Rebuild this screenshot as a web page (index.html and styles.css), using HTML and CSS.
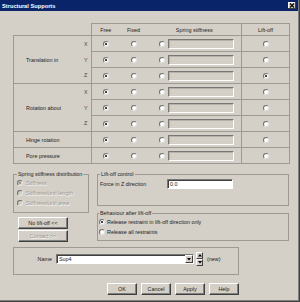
FILE: index.html
```html
<!DOCTYPE html>
<html>
<head>
<meta charset="utf-8">
<link rel="stylesheet" href="styles.css">
</head>
<body>
<div class="window">
  <div class="titlebar">
    <span class="title">Structural Supports</span>
    <span class="close"><svg width="6" height="5" viewBox="0 0 6 5"><path d="M1 0.5 L5 4.5 M5 0.5 L1 4.5" stroke="#000" stroke-width="1.1"/></svg></span>
  </div>
  <div class="content">
    <table class="grid">
      <colgroup><col class="c-lbl"><col class="c-xyz"><col class="c-free"><col class="c-fixed"><col class="c-spring"><col class="c-lift"></colgroup>
      <thead>
        <tr class="hdr"><th colspan="2" class="blank"></th><th class="free">Free</th><th>Fixed</th><th>Spring stiffness</th><th class="lift">Lift-off</th></tr>
      </thead>
      <tbody>
        <tr class="first"><td rowspan="3" class="lbl">Translation in</td><td class="xyz">X</td><td class="free"><span class="radio on"></span></td><td class="fixed"><span class="radio"></span></td><td class="spring"><div class="sp"><span class="radio"></span><span class="field"></span></div></td><td class="lift"><span class="radio"></span></td></tr>
        <tr><td class="xyz">Y</td><td class="free"><span class="radio on"></span></td><td class="fixed"><span class="radio"></span></td><td class="spring"><div class="sp"><span class="radio"></span><span class="field"></span></div></td><td class="lift"><span class="radio"></span></td></tr>
        <tr><td class="xyz">Z</td><td class="free"><span class="radio on"></span></td><td class="fixed"><span class="radio"></span></td><td class="spring"><div class="sp"><span class="radio"></span><span class="field"></span></div></td><td class="lift"><span class="radio on"></span></td></tr>
        <tr class="first"><td rowspan="3" class="lbl">Rotation about</td><td class="xyz">X</td><td class="free"><span class="radio on"></span></td><td class="fixed"><span class="radio"></span></td><td class="spring"><div class="sp"><span class="radio"></span><span class="field"></span></div></td><td class="lift"><span class="radio"></span></td></tr>
        <tr><td class="xyz">Y</td><td class="free"><span class="radio on"></span></td><td class="fixed"><span class="radio"></span></td><td class="spring"><div class="sp"><span class="radio"></span><span class="field"></span></div></td><td class="lift"><span class="radio"></span></td></tr>
        <tr><td class="xyz">Z</td><td class="free"><span class="radio on"></span></td><td class="fixed"><span class="radio"></span></td><td class="spring"><div class="sp"><span class="radio"></span><span class="field"></span></div></td><td class="lift"><span class="radio"></span></td></tr>
        <tr class="first"><td colspan="2" class="lbl">Hinge rotation</td><td class="free"><span class="radio on"></span></td><td class="fixed"><span class="radio"></span></td><td class="spring"><div class="sp"><span class="radio"></span><span class="field"></span></div></td><td class="lift"><span class="radio"></span></td></tr>
        <tr class="first last"><td colspan="2" class="lbl">Pore pressure</td><td class="free"><span class="radio on"></span></td><td class="fixed"><span class="radio"></span></td><td class="spring"><div class="sp"><span class="radio"></span><span class="field"></span></div></td><td class="lift"><span class="radio"></span></td></tr>
      </tbody>
    </table>

    <div class="lower">
      <div class="lcol">
        <fieldset class="grp dist">
          <legend>Spring stiffness distribution</legend>
          <div class="opt dis"><span class="radio on dis"></span><span>Stiffness</span></div>
          <div class="opt dis"><span class="radio dis"></span><span>Stiffness/unit length</span></div>
          <div class="opt dis"><span class="radio dis"></span><span>Stiffness/unit area</span></div>
        </fieldset>
        <button class="btn side">No lift-off &lt;&lt;</button>
        <button class="btn side contact" disabled>Contact &gt;&gt;</button>
      </div>
      <div class="rcol">
        <fieldset class="grp liftctl">
          <legend>Lift-off control</legend>
          <div class="frow"><span class="flabel">Force in Z direction</span><span class="input">0.0</span></div>
        </fieldset>
        <fieldset class="grp behav">
          <legend>Behaviour after lift-off</legend>
          <div class="opt"><span class="radio on"></span><span>Release restraint in lift-off direction only</span></div>
          <div class="opt"><span class="radio"></span><span>Release all restraints</span></div>
        </fieldset>
      </div>
    </div>

    <fieldset class="grp namebox">
      <div class="nrow">
        <span class="nlabel">Name</span>
        <span class="combo"><span class="ctext">Sup4</span><span class="ddbtn"><svg width="4" height="3" viewBox="0 0 4 3"><path d="M0 0 H4 L2 2.5 Z" fill="#000"/></svg></span></span>
        <span class="spin"><span class="sbtn"><svg width="4" height="3" viewBox="0 0 4 3"><path d="M0 2.5 H4 L2 0 Z" fill="#000"/></svg></span><span class="sbtn"><svg width="4" height="3" viewBox="0 0 4 3"><path d="M0 0 H4 L2 2.5 Z" fill="#000"/></svg></span></span>
        <span class="newtxt">(new)</span>
      </div>
    </fieldset>

    <div class="buttons">
      <button class="btn act">OK</button>
      <button class="btn act">Cancel</button>
      <button class="btn act">Apply</button>
      <button class="btn act">Help</button>
    </div>
  </div>
</div>
</body>
</html>
```

FILE: styles.css
```css
body {
  margin: 0;
  font-family: "Liberation Sans", Arial, sans-serif;
  font-size: 5.4px;
  color: #1c1c1c;
  background: #d4d0c8;
}

.window {
  width: 300px;
  height: 302px;
  box-sizing: border-box;
  background: #d4d0c8;
  box-shadow: inset -1px -1px 0 #404040, inset -2px -2px 0 #808080;
  display: flex;
  flex-direction: column;
}

.titlebar {
  width: 298px;
  height: 11px;
  box-sizing: border-box;
  background: #0a246a;
  display: flex;
  align-items: center;
  justify-content: space-between;
  padding: 0 2px 0 2px;
}

.title {
  color: #fff;
  font-weight: bold;
  font-size: 5.7px;
}

.close {
  width: 8px;
  height: 7px;
  background: #d4d0c8;
  box-shadow: inset -1px -1px 0 #404040, inset 1px 1px 0 #fff;
  display: flex;
  align-items: center;
  justify-content: center;
}

.content {
  padding: 12px 0 0 13px;
}

/* table */
.grid {
  border-collapse: collapse;
  table-layout: fixed;
  width: 277px;
}
.c-lbl { width: 67px; }
.c-xyz { width: 11px; }
.c-free { width: 28px; }
.c-fixed { width: 28px; }
.c-spring { width: 94px; }
.c-lift { width: 48px; }

.grid th, .grid td {
  padding: 0;
  vertical-align: middle;
  text-align: center;
}
.grid th {
  font-weight: normal;
  border-top: 1px solid #9d9a93;
  border-bottom: 1px solid #9d9a93;
}
.grid th.blank {
  border: none;
}
.hdr { height: 12px; }
.grid tbody tr { height: 16px; }

.grid td.free,
.grid td.fixed,
.grid td.spring,
.grid td.lift {
  border-top: 1px solid #9d9a93;
}
.grid .free { border-left: 1px solid #9d9a93; }
.grid .lift { border-left: 1px solid #9d9a93; border-right: 1px solid #9d9a93; }
.grid tr.first td { border-top: 1px solid #9d9a93; }
.grid tr.last td { border-bottom: 1px solid #9d9a93; }
.grid td.lbl {
  border-left: 1px solid #9d9a93;
  border-bottom: 1px solid #9d9a93;
  text-align: left;
  padding-left: 12px;
}
.grid td.xyz {
  text-align: center;
  color: #444;
}

.sp {
  display: flex;
  align-items: center;
  gap: 3px;
  padding-left: 11px;
}

.radio {
  display: inline-flex;
  align-items: center;
  justify-content: center;
  width: 6px;
  height: 6px;
  box-sizing: border-box;
  border-radius: 50%;
  background: #fff;
  border: 1px solid;
  border-color: #6e6e6e #e4e4e4 #e4e4e4 #6e6e6e;
  vertical-align: middle;
  flex: none;
}
.radio.on::after {
  content: "";
  width: 2px;
  height: 2px;
  border-radius: 50%;
  background: #000;
}
.radio.dis { background: #d4d0c8; }
.radio.dis.on::after { background: #8a8780; }

.field {
  display: inline-block;
  width: 66px;
  height: 10px;
  box-sizing: border-box;
  border: 1px solid;
  border-color: #7a7872 #fff #fff #7a7872;
  box-shadow: inset 1px 1px 0 #b5b2ab;
  background: #d4d0c8;
}

/* lower */
.lower {
  display: flex;
  gap: 8px;
  margin-top: 7px;
}
.lcol {
  width: 76px;
  display: flex;
  flex-direction: column;
}
.rcol {
  width: 192px;
  display: flex;
  flex-direction: column;
}

.grp {
  margin: 0;
  border: 1px solid #9d9a93;
  padding: 0 3px;
  min-width: 0;
  box-sizing: border-box;
}
.grp legend {
  padding: 0 1px;
  line-height: 7px;
  font-size: 5.4px;
}

.dist {
  width: 76px;
  padding-bottom: 4px;
}

.opt {
  display: flex;
  align-items: center;
  gap: 3px;
  height: 10px;
  white-space: nowrap;
}
.opt.dis span:last-child {
  color: #98958e;
  text-shadow: 0.6px 0.6px 0 #fff;
}

.btn {
  font-family: "Liberation Sans", Arial, sans-serif;
  font-size: 5.4px;
  color: #1c1c1c;
  background: #d4d0c8;
  border: 1px solid;
  border-color: #fff #404040 #404040 #fff;
  box-shadow: inset -1px -1px 0 #808080;
  padding: 0;
  height: 12px;
  box-sizing: border-box;
}
.btn.side {
  width: 50px;
  margin-left: 5px;
  margin-top: 4px;
}
.btn.contact {
  margin-top: 1px;
  color: #98958e;
  text-shadow: 0.6px 0.6px 0 #fff;
}

.liftctl {
  padding: 0 2px 16px 2px;
}
.frow {
  display: flex;
  align-items: center;
  margin-top: 1px;
  height: 10px;
}
.flabel {
  width: 67px;
  flex: none;
}
.input {
  width: 66px;
  height: 10px;
  box-sizing: border-box;
  background: #fff;
  border: 1px solid;
  border-color: #7a7872 #fff #fff #7a7872;
  box-shadow: inset 1px 1px 0 #404040;
  padding-left: 2px;
  display: flex;
  align-items: center;
}

.behav {
  margin-top: 4px;
  padding: 0 1px 3px 1px;
}
.behav .opt { gap: 2px; }

.namebox {
  width: 226px;
  margin-top: 5px;
  padding: 4px 0 8px 0;
}
.nrow {
  display: flex;
  align-items: center;
  height: 14px;
}
.nlabel {
  width: 38px;
  text-align: right;
  margin-right: 4px;
}
.combo {
  width: 138px;
  height: 10px;
  box-sizing: border-box;
  background: #fff;
  border: 1px solid;
  border-color: #7a7872 #fff #fff #7a7872;
  box-shadow: inset 1px 1px 0 #404040;
  display: flex;
  align-items: center;
}
.ctext {
  flex: 1;
  padding-left: 2px;
}
.ddbtn {
  width: 8px;
  height: 8px;
  box-sizing: border-box;
  background: #d4d0c8;
  border: 1px solid;
  border-color: #fff #404040 #404040 #fff;
  display: flex;
  align-items: center;
  justify-content: center;
}
.spin {
  display: flex;
  flex-direction: column;
  margin-left: 2px;
}
.sbtn {
  width: 7px;
  height: 7px;
  box-sizing: border-box;
  background: #d4d0c8;
  border: 1px solid;
  border-color: #fff #404040 #404040 #fff;
  display: flex;
  align-items: center;
  justify-content: center;
}
.newtxt {
  margin-left: 4px;
}

.buttons {
  width: 226px;
  display: flex;
  justify-content: flex-end;
  gap: 4px;
  margin-top: 8px;
}
.btn.act {
  width: 30px;
}
```
